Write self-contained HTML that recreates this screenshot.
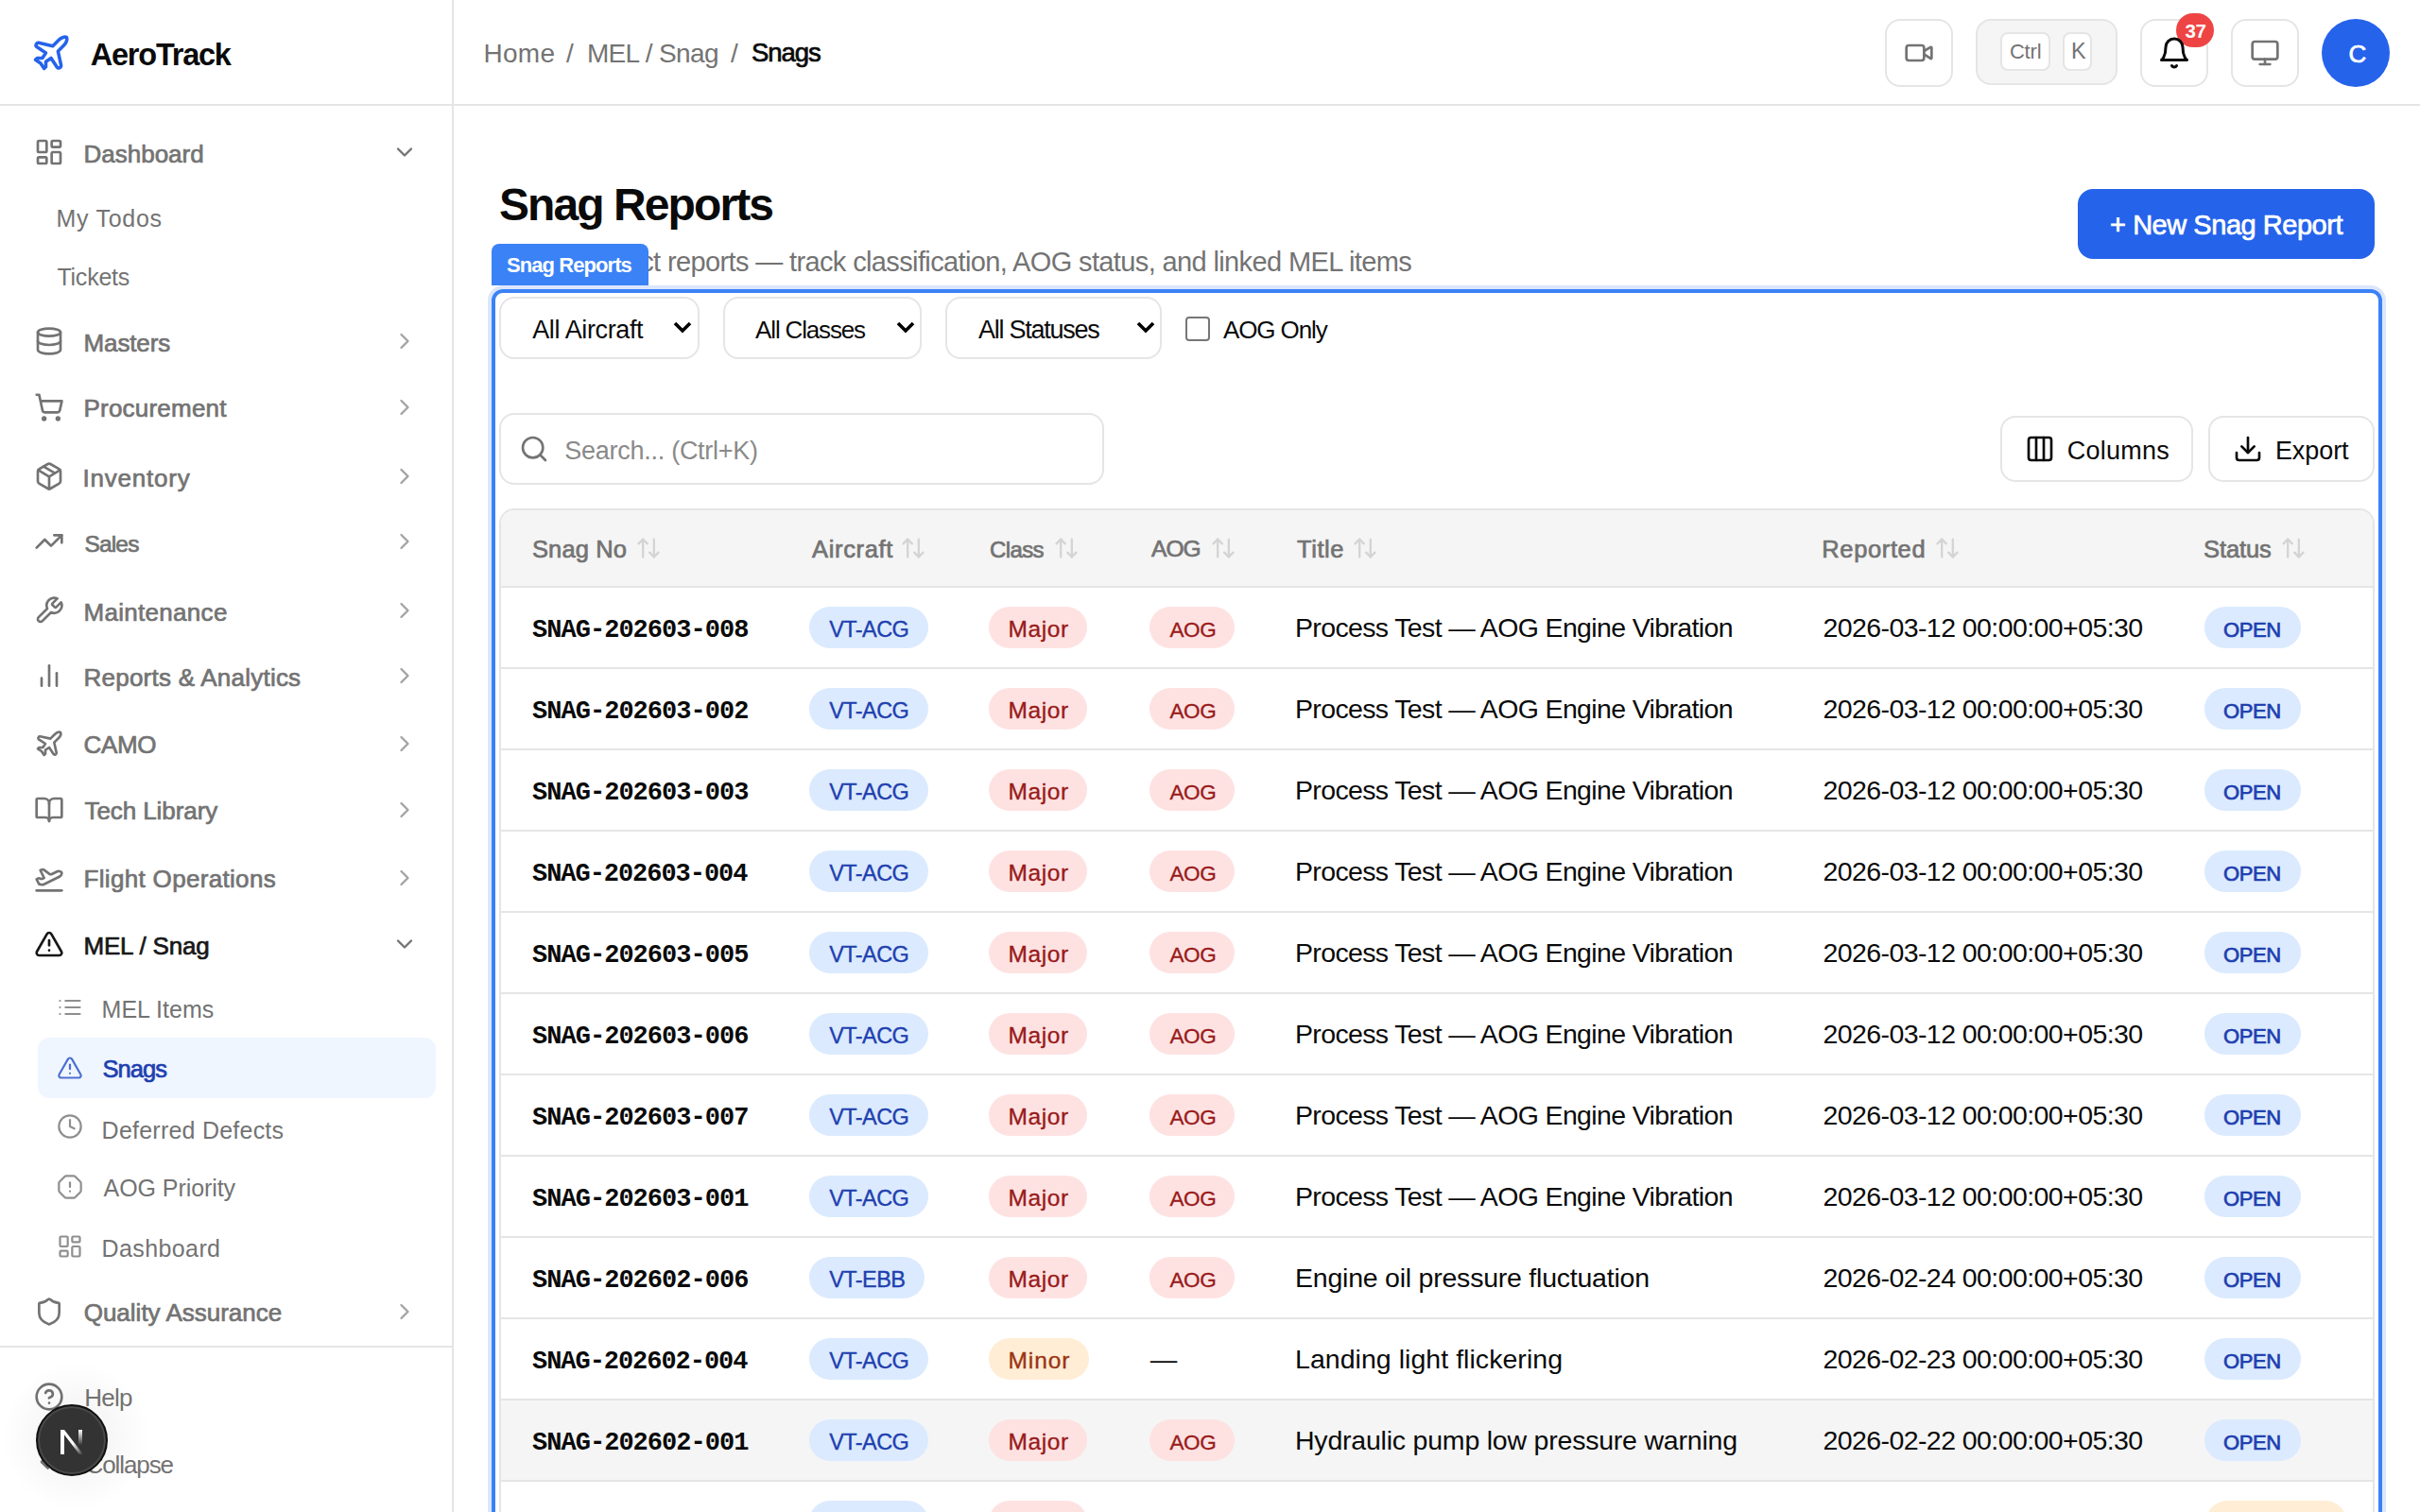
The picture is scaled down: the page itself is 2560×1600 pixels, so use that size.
<!DOCTYPE html><html><head><meta charset="utf-8"><style>
html,body{margin:0;padding:0;width:2560px;height:1600px;overflow:hidden;background:#fff}
.t{position:absolute;white-space:pre}
.b{position:absolute}
.i{position:absolute;display:block}
</style></head><body>
<div class="b" style="left:478px;top:0px;width:2px;height:1600px;background:#e5e5e5"></div>
<div class="b" style="left:0px;top:110px;width:2560px;height:2px;background:#e5e5e5"></div>
<div class="b" style="left:40px;top:1098px;width:421px;height:64px;background:#eff6ff;border-radius:12px"></div>
<div class="b" style="left:0px;top:1424px;width:478px;height:2px;background:#e5e5e5"></div>
<div class="b" style="left:1994px;top:20px;width:72px;height:72px;border:2px solid #e5e5e5;border-radius:16px;box-sizing:border-box;background:#fff"></div>
<div class="b" style="left:2090px;top:20px;width:150px;height:70px;border:2px solid #e5e5e5;border-radius:16px;box-sizing:border-box;background:#f5f5f5"></div>
<div class="b" style="left:2116px;top:34px;width:53px;height:41px;border:2px solid #e5e5e5;border-radius:8px;box-sizing:border-box;background:#fff"></div>
<div class="b" style="left:2182px;top:34px;width:31px;height:41px;border:2px solid #e5e5e5;border-radius:8px;box-sizing:border-box;background:#fff"></div>
<div class="b" style="left:2264px;top:20px;width:72px;height:72px;border:2px solid #e5e5e5;border-radius:16px;box-sizing:border-box;background:#fff"></div>
<div class="b" style="left:2302px;top:14px;width:40px;height:36px;background:#ef4444;border-radius:18px"></div>
<div class="b" style="left:2360px;top:20px;width:72px;height:72px;border:2px solid #e5e5e5;border-radius:16px;box-sizing:border-box;background:#fff"></div>
<div class="b" style="left:2456px;top:20px;width:72px;height:72px;background:#2563eb;border-radius:50%"></div>
<div class="b" style="left:2198px;top:200px;width:314px;height:74px;background:#2563eb;border-radius:16px"></div>
<div class="b" style="left:528px;top:314px;width:212px;height:66px;border:2px solid #e5e5e5;border-radius:16px;box-sizing:border-box;background:#fff"></div>
<svg class="i" style="left:710.8px;top:338px;width:22px;height:17px" viewBox="0 0 22 17"><path d="M3 4 L11 12 L19 4" fill="none" stroke="#000" stroke-width="3.6" stroke-linecap="butt" stroke-linejoin="miter"/></svg>
<div class="b" style="left:765px;top:314px;width:210px;height:66px;border:2px solid #e5e5e5;border-radius:16px;box-sizing:border-box;background:#fff"></div>
<svg class="i" style="left:947.4px;top:338px;width:22px;height:17px" viewBox="0 0 22 17"><path d="M3 4 L11 12 L19 4" fill="none" stroke="#000" stroke-width="3.6" stroke-linecap="butt" stroke-linejoin="miter"/></svg>
<div class="b" style="left:1000px;top:314px;width:229px;height:66px;border:2px solid #e5e5e5;border-radius:16px;box-sizing:border-box;background:#fff"></div>
<svg class="i" style="left:1200.9px;top:338px;width:22px;height:17px" viewBox="0 0 22 17"><path d="M3 4 L11 12 L19 4" fill="none" stroke="#000" stroke-width="3.6" stroke-linecap="butt" stroke-linejoin="miter"/></svg>
<div class="b" style="left:1254px;top:335px;width:26px;height:26px;border:2px solid #767676;border-radius:4px;box-sizing:border-box;background:#fff"></div>
<div class="b" style="left:528px;top:437px;width:640px;height:76px;border:2px solid #e5e5e5;border-radius:16px;box-sizing:border-box;background:#fff"></div>
<div class="b" style="left:2116px;top:440px;width:204px;height:70px;border:2px solid #e5e5e5;border-radius:16px;box-sizing:border-box;background:#fff"></div>
<div class="b" style="left:2336px;top:440px;width:176px;height:70px;border:2px solid #e5e5e5;border-radius:16px;box-sizing:border-box;background:#fff"></div>
<div class="b" style="left:528px;top:538px;width:1984px;height:1100px;border:2px solid #e5e5e5;border-radius:16px;box-sizing:border-box;background:#fff;overflow:hidden"></div>
<div class="b" style="left:530px;top:540px;width:1980px;height:80px;background:#f5f5f5;border-radius:14px 14px 0 0"></div>
<div class="b" style="left:530px;top:620px;width:1980px;height:2px;background:#e5e5e5"></div>
<div class="b" style="left:530px;top:706px;width:1980px;height:2px;background:#e5e5e5"></div>
<div class="b" style="left:856px;top:642px;width:126px;height:44px;background:#dbeafe;border-radius:22px"></div>
<div class="b" style="left:1046px;top:642px;width:104px;height:44px;background:#fee2e2;border-radius:22px"></div>
<div class="b" style="left:1216px;top:642px;width:90px;height:44px;background:#fee2e2;border-radius:22px"></div>
<div class="b" style="left:2332px;top:642px;width:102px;height:44px;background:#dbeafe;border-radius:22px"></div>
<div class="b" style="left:530px;top:792px;width:1980px;height:2px;background:#e5e5e5"></div>
<div class="b" style="left:856px;top:728px;width:126px;height:44px;background:#dbeafe;border-radius:22px"></div>
<div class="b" style="left:1046px;top:728px;width:104px;height:44px;background:#fee2e2;border-radius:22px"></div>
<div class="b" style="left:1216px;top:728px;width:90px;height:44px;background:#fee2e2;border-radius:22px"></div>
<div class="b" style="left:2332px;top:728px;width:102px;height:44px;background:#dbeafe;border-radius:22px"></div>
<div class="b" style="left:530px;top:878px;width:1980px;height:2px;background:#e5e5e5"></div>
<div class="b" style="left:856px;top:814px;width:126px;height:44px;background:#dbeafe;border-radius:22px"></div>
<div class="b" style="left:1046px;top:814px;width:104px;height:44px;background:#fee2e2;border-radius:22px"></div>
<div class="b" style="left:1216px;top:814px;width:90px;height:44px;background:#fee2e2;border-radius:22px"></div>
<div class="b" style="left:2332px;top:814px;width:102px;height:44px;background:#dbeafe;border-radius:22px"></div>
<div class="b" style="left:530px;top:964px;width:1980px;height:2px;background:#e5e5e5"></div>
<div class="b" style="left:856px;top:900px;width:126px;height:44px;background:#dbeafe;border-radius:22px"></div>
<div class="b" style="left:1046px;top:900px;width:104px;height:44px;background:#fee2e2;border-radius:22px"></div>
<div class="b" style="left:1216px;top:900px;width:90px;height:44px;background:#fee2e2;border-radius:22px"></div>
<div class="b" style="left:2332px;top:900px;width:102px;height:44px;background:#dbeafe;border-radius:22px"></div>
<div class="b" style="left:530px;top:1050px;width:1980px;height:2px;background:#e5e5e5"></div>
<div class="b" style="left:856px;top:986px;width:126px;height:44px;background:#dbeafe;border-radius:22px"></div>
<div class="b" style="left:1046px;top:986px;width:104px;height:44px;background:#fee2e2;border-radius:22px"></div>
<div class="b" style="left:1216px;top:986px;width:90px;height:44px;background:#fee2e2;border-radius:22px"></div>
<div class="b" style="left:2332px;top:986px;width:102px;height:44px;background:#dbeafe;border-radius:22px"></div>
<div class="b" style="left:530px;top:1136px;width:1980px;height:2px;background:#e5e5e5"></div>
<div class="b" style="left:856px;top:1072px;width:126px;height:44px;background:#dbeafe;border-radius:22px"></div>
<div class="b" style="left:1046px;top:1072px;width:104px;height:44px;background:#fee2e2;border-radius:22px"></div>
<div class="b" style="left:1216px;top:1072px;width:90px;height:44px;background:#fee2e2;border-radius:22px"></div>
<div class="b" style="left:2332px;top:1072px;width:102px;height:44px;background:#dbeafe;border-radius:22px"></div>
<div class="b" style="left:530px;top:1222px;width:1980px;height:2px;background:#e5e5e5"></div>
<div class="b" style="left:856px;top:1158px;width:126px;height:44px;background:#dbeafe;border-radius:22px"></div>
<div class="b" style="left:1046px;top:1158px;width:104px;height:44px;background:#fee2e2;border-radius:22px"></div>
<div class="b" style="left:1216px;top:1158px;width:90px;height:44px;background:#fee2e2;border-radius:22px"></div>
<div class="b" style="left:2332px;top:1158px;width:102px;height:44px;background:#dbeafe;border-radius:22px"></div>
<div class="b" style="left:530px;top:1308px;width:1980px;height:2px;background:#e5e5e5"></div>
<div class="b" style="left:856px;top:1244px;width:126px;height:44px;background:#dbeafe;border-radius:22px"></div>
<div class="b" style="left:1046px;top:1244px;width:104px;height:44px;background:#fee2e2;border-radius:22px"></div>
<div class="b" style="left:1216px;top:1244px;width:90px;height:44px;background:#fee2e2;border-radius:22px"></div>
<div class="b" style="left:2332px;top:1244px;width:102px;height:44px;background:#dbeafe;border-radius:22px"></div>
<div class="b" style="left:530px;top:1394px;width:1980px;height:2px;background:#e5e5e5"></div>
<div class="b" style="left:856px;top:1330px;width:122px;height:44px;background:#dbeafe;border-radius:22px"></div>
<div class="b" style="left:1046px;top:1330px;width:104px;height:44px;background:#fee2e2;border-radius:22px"></div>
<div class="b" style="left:1216px;top:1330px;width:90px;height:44px;background:#fee2e2;border-radius:22px"></div>
<div class="b" style="left:2332px;top:1330px;width:102px;height:44px;background:#dbeafe;border-radius:22px"></div>
<div class="b" style="left:530px;top:1480px;width:1980px;height:2px;background:#e5e5e5"></div>
<div class="b" style="left:856px;top:1416px;width:126px;height:44px;background:#dbeafe;border-radius:22px"></div>
<div class="b" style="left:1046px;top:1416px;width:106px;height:44px;background:#ffedd5;border-radius:22px"></div>
<div class="b" style="left:2332px;top:1416px;width:102px;height:44px;background:#dbeafe;border-radius:22px"></div>
<div class="b" style="left:530px;top:1482px;width:1980px;height:84px;background:#f5f5f5"></div>
<div class="b" style="left:530px;top:1566px;width:1980px;height:2px;background:#e5e5e5"></div>
<div class="b" style="left:856px;top:1502px;width:126px;height:44px;background:#dbeafe;border-radius:22px"></div>
<div class="b" style="left:1046px;top:1502px;width:104px;height:44px;background:#fee2e2;border-radius:22px"></div>
<div class="b" style="left:1216px;top:1502px;width:90px;height:44px;background:#fee2e2;border-radius:22px"></div>
<div class="b" style="left:2332px;top:1502px;width:102px;height:44px;background:#dbeafe;border-radius:22px"></div>
<div class="b" style="left:530px;top:1652px;width:1980px;height:2px;background:#e5e5e5"></div>
<div class="b" style="left:856px;top:1588px;width:126px;height:44px;background:#dbeafe;border-radius:22px"></div>
<div class="b" style="left:1046px;top:1588px;width:104px;height:44px;background:#fee2e2;border-radius:22px"></div>
<div class="b" style="left:2334px;top:1588px;width:148px;height:44px;background:#ffedd5;border-radius:22px"></div>
<svg class="i" style="left:32px;top:34px;width:44px;height:44px" viewBox="0 0 24 24" fill="none" stroke="#2563eb" stroke-width="1.95" stroke-linecap="round" stroke-linejoin="round"><path d="M17.8 19.2 16 11l3.5-3.5C21 6 21.5 4 21 3c-1-.5-3 0-4.5 1.5L13 8 4.8 6.2c-.5-.1-.9.1-1.1.5l-.3.5c-.2.5-.1 1 .3 1.3L9 12l-2 3H4l-1 1 3 2 2 3 1-1v-3l3-2 3.5 5.3c.3.4.8.5 1.3.3l.5-.2c.4-.3.6-.7.5-1.2z"/></svg>
<svg class="i" style="left:36px;top:145px;width:32px;height:32px" viewBox="0 0 24 24" fill="none" stroke="#737373" stroke-width="2" stroke-linecap="round" stroke-linejoin="round"><rect width="7" height="9" x="3" y="3" rx="1"/><rect width="7" height="5" x="14" y="3" rx="1"/><rect width="7" height="9" x="14" y="12" rx="1"/><rect width="7" height="5" x="3" y="16" rx="1"/></svg>
<svg class="i" style="left:414px;top:147px;width:28px;height:28px" viewBox="0 0 24 24" fill="none" stroke="#737373" stroke-width="2" stroke-linecap="round" stroke-linejoin="round"><path d="m6 9 6 6 6-6"/></svg>
<svg class="i" style="left:36px;top:345px;width:32px;height:32px" viewBox="0 0 24 24" fill="none" stroke="#737373" stroke-width="2" stroke-linecap="round" stroke-linejoin="round"><ellipse cx="12" cy="5" rx="9" ry="3"/><path d="M3 5V19A9 3 0 0 0 21 19V5"/><path d="M3 12A9 3 0 0 0 21 12"/></svg>
<svg class="i" style="left:414px;top:347px;width:28px;height:28px" viewBox="0 0 24 24" fill="none" stroke="#a3a3a3" stroke-width="2" stroke-linecap="round" stroke-linejoin="round"><path d="m9 18 6-6-6-6"/></svg>
<svg class="i" style="left:36px;top:415px;width:32px;height:32px" viewBox="0 0 24 24" fill="none" stroke="#737373" stroke-width="2" stroke-linecap="round" stroke-linejoin="round"><circle cx="8" cy="21" r="1"/><circle cx="19" cy="21" r="1"/><path d="M2.05 2.05h2l2.66 12.42a2 2 0 0 0 2 1.58h9.78a2 2 0 0 0 1.95-1.57l1.65-7.43H5.12"/></svg>
<svg class="i" style="left:414px;top:417px;width:28px;height:28px" viewBox="0 0 24 24" fill="none" stroke="#a3a3a3" stroke-width="2" stroke-linecap="round" stroke-linejoin="round"><path d="m9 18 6-6-6-6"/></svg>
<svg class="i" style="left:36px;top:488px;width:32px;height:32px" viewBox="0 0 24 24" fill="none" stroke="#737373" stroke-width="2" stroke-linecap="round" stroke-linejoin="round"><path d="M11 21.73a2 2 0 0 0 2 0l7-4A2 2 0 0 0 21 16V8a2 2 0 0 0-1-1.73l-7-4a2 2 0 0 0-2 0l-7 4A2 2 0 0 0 3 8v8a2 2 0 0 0 1 1.73z"/><path d="M12 22V12"/><path d="m3.3 7 7.703 4.734a2 2 0 0 0 1.994 0L20.7 7"/><path d="m7.5 4.27 9 5.15"/></svg>
<svg class="i" style="left:414px;top:490px;width:28px;height:28px" viewBox="0 0 24 24" fill="none" stroke="#a3a3a3" stroke-width="2" stroke-linecap="round" stroke-linejoin="round"><path d="m9 18 6-6-6-6"/></svg>
<svg class="i" style="left:36px;top:557px;width:32px;height:32px" viewBox="0 0 24 24" fill="none" stroke="#737373" stroke-width="2" stroke-linecap="round" stroke-linejoin="round"><polyline points="22 7 13.5 15.5 8.5 10.5 2 17"/><polyline points="16 7 22 7 22 13"/></svg>
<svg class="i" style="left:414px;top:559px;width:28px;height:28px" viewBox="0 0 24 24" fill="none" stroke="#a3a3a3" stroke-width="2" stroke-linecap="round" stroke-linejoin="round"><path d="m9 18 6-6-6-6"/></svg>
<svg class="i" style="left:36px;top:630px;width:32px;height:32px" viewBox="0 0 24 24" fill="none" stroke="#737373" stroke-width="2" stroke-linecap="round" stroke-linejoin="round"><path d="M14.7 6.3a1 1 0 0 0 0 1.4l1.6 1.6a1 1 0 0 0 1.4 0l3.77-3.77a6 6 0 0 1-7.94 7.94l-6.91 6.91a2.12 2.12 0 0 1-3-3l6.91-6.91a6 6 0 0 1 7.94-7.94l-3.76 3.76z"/></svg>
<svg class="i" style="left:414px;top:632px;width:28px;height:28px" viewBox="0 0 24 24" fill="none" stroke="#a3a3a3" stroke-width="2" stroke-linecap="round" stroke-linejoin="round"><path d="m9 18 6-6-6-6"/></svg>
<svg class="i" style="left:36px;top:699px;width:32px;height:32px" viewBox="0 0 24 24" fill="none" stroke="#737373" stroke-width="2" stroke-linecap="round" stroke-linejoin="round"><line x1="18" x2="18" y1="20" y2="10"/><line x1="12" x2="12" y1="20" y2="4"/><line x1="6" x2="6" y1="20" y2="14"/></svg>
<svg class="i" style="left:414px;top:701px;width:28px;height:28px" viewBox="0 0 24 24" fill="none" stroke="#a3a3a3" stroke-width="2" stroke-linecap="round" stroke-linejoin="round"><path d="m9 18 6-6-6-6"/></svg>
<svg class="i" style="left:36px;top:771px;width:32px;height:32px" viewBox="0 0 24 24" fill="none" stroke="#737373" stroke-width="2" stroke-linecap="round" stroke-linejoin="round"><path d="M17.8 19.2 16 11l3.5-3.5C21 6 21.5 4 21 3c-1-.5-3 0-4.5 1.5L13 8 4.8 6.2c-.5-.1-.9.1-1.1.5l-.3.5c-.2.5-.1 1 .3 1.3L9 12l-2 3H4l-1 1 3 2 2 3 1-1v-3l3-2 3.5 5.3c.3.4.8.5 1.3.3l.5-.2c.4-.3.6-.7.5-1.2z"/></svg>
<svg class="i" style="left:414px;top:773px;width:28px;height:28px" viewBox="0 0 24 24" fill="none" stroke="#a3a3a3" stroke-width="2" stroke-linecap="round" stroke-linejoin="round"><path d="m9 18 6-6-6-6"/></svg>
<svg class="i" style="left:36px;top:841px;width:32px;height:32px" viewBox="0 0 24 24" fill="none" stroke="#737373" stroke-width="2" stroke-linecap="round" stroke-linejoin="round"><path d="M12 7v14"/><path d="M3 18a1 1 0 0 1-1-1V4a1 1 0 0 1 1-1h5a4 4 0 0 1 4 4 4 4 0 0 1 4-4h5a1 1 0 0 1 1 1v13a1 1 0 0 1-1 1h-6a3 3 0 0 0-3 3 3 3 0 0 0-3-3z"/></svg>
<svg class="i" style="left:414px;top:843px;width:28px;height:28px" viewBox="0 0 24 24" fill="none" stroke="#a3a3a3" stroke-width="2" stroke-linecap="round" stroke-linejoin="round"><path d="m9 18 6-6-6-6"/></svg>
<svg class="i" style="left:36px;top:913px;width:32px;height:32px" viewBox="0 0 24 24" fill="none" stroke="#737373" stroke-width="2" stroke-linecap="round" stroke-linejoin="round"><path d="M2 22h20"/><path d="M6.36 17.4 4 17l-2-4 1.1-.55a2 2 0 0 1 1.8 0l.17.1a2 2 0 0 0 1.8 0L8 12 5 6l.9-.45a2 2 0 0 1 2.09.2l4.02 3a2 2 0 0 0 2.1.2l4.19-2.06a2.41 2.41 0 0 1 1.73-.17L21 7a1.4 1.4 0 0 1 .87 1.99l-.38.76c-.23.46-.6.84-1.07 1.08L7.58 17.2a2 2 0 0 1-1.22.18Z"/></svg>
<svg class="i" style="left:414px;top:915px;width:28px;height:28px" viewBox="0 0 24 24" fill="none" stroke="#a3a3a3" stroke-width="2" stroke-linecap="round" stroke-linejoin="round"><path d="m9 18 6-6-6-6"/></svg>
<svg class="i" style="left:36px;top:983px;width:32px;height:32px" viewBox="0 0 24 24" fill="none" stroke="#171717" stroke-width="2" stroke-linecap="round" stroke-linejoin="round"><path d="m21.73 18-8-14a2 2 0 0 0-3.48 0l-8 14A2 2 0 0 0 4 21h16a2 2 0 0 0 1.73-3"/><path d="M12 9v4"/><path d="M12 17h.01"/></svg>
<svg class="i" style="left:414px;top:985px;width:28px;height:28px" viewBox="0 0 24 24" fill="none" stroke="#737373" stroke-width="2" stroke-linecap="round" stroke-linejoin="round"><path d="m6 9 6 6 6-6"/></svg>
<svg class="i" style="left:36px;top:1372px;width:32px;height:32px" viewBox="0 0 24 24" fill="none" stroke="#737373" stroke-width="2" stroke-linecap="round" stroke-linejoin="round"><path d="M20 13c0 5-3.5 7.5-7.66 8.95a1 1 0 0 1-.67-.01C7.5 20.5 4 18 4 13V6a1 1 0 0 1 1-1c2 0 4.5-1.2 6.24-2.72a1.17 1.17 0 0 1 1.52 0C14.51 3.81 17 5 19 5a1 1 0 0 1 1 1z"/></svg>
<svg class="i" style="left:414px;top:1374px;width:28px;height:28px" viewBox="0 0 24 24" fill="none" stroke="#a3a3a3" stroke-width="2" stroke-linecap="round" stroke-linejoin="round"><path d="m9 18 6-6-6-6"/></svg>
<svg class="i" style="left:60px;top:1052px;width:28px;height:28px" viewBox="0 0 24 24" fill="none" stroke="#8f8f8f" stroke-width="1.9" stroke-linecap="round" stroke-linejoin="round"><path d="M3 12h.01"/><path d="M3 18h.01"/><path d="M3 6h.01"/><path d="M8 12h13"/><path d="M8 18h13"/><path d="M8 6h13"/></svg>
<svg class="i" style="left:60px;top:1116px;width:28px;height:28px" viewBox="0 0 24 24" fill="none" stroke="#4f6fd0" stroke-width="1.9" stroke-linecap="round" stroke-linejoin="round"><path d="m21.73 18-8-14a2 2 0 0 0-3.48 0l-8 14A2 2 0 0 0 4 21h16a2 2 0 0 0 1.73-3"/><path d="M12 9v4"/><path d="M12 17h.01"/></svg>
<svg class="i" style="left:60px;top:1178px;width:28px;height:28px" viewBox="0 0 24 24" fill="none" stroke="#8f8f8f" stroke-width="1.9" stroke-linecap="round" stroke-linejoin="round"><circle cx="12" cy="12" r="10"/><polyline points="12 6 12 12 16 14"/></svg>
<svg class="i" style="left:60px;top:1242px;width:28px;height:28px" viewBox="0 0 24 24" fill="none" stroke="#8f8f8f" stroke-width="1.9" stroke-linecap="round" stroke-linejoin="round"><path d="M12 16h.01"/><path d="M12 8v4"/><path d="M15.312 2a2 2 0 0 1 1.414.586l4.688 4.688A2 2 0 0 1 22 8.688v6.624a2 2 0 0 1-.586 1.414l-4.688 4.688a2 2 0 0 1-1.414.586H8.688a2 2 0 0 1-1.414-.586l-4.688-4.688A2 2 0 0 1 2 15.312V8.688a2 2 0 0 1 .586-1.414l4.688-4.688A2 2 0 0 1 8.688 2z"/></svg>
<svg class="i" style="left:60px;top:1305px;width:28px;height:28px" viewBox="0 0 24 24" fill="none" stroke="#8f8f8f" stroke-width="1.9" stroke-linecap="round" stroke-linejoin="round"><rect width="7" height="9" x="3" y="3" rx="1"/><rect width="7" height="5" x="14" y="3" rx="1"/><rect width="7" height="9" x="14" y="12" rx="1"/><rect width="7" height="5" x="3" y="16" rx="1"/></svg>
<svg class="i" style="left:36px;top:1462px;width:32px;height:32px" viewBox="0 0 24 24" fill="none" stroke="#737373" stroke-width="2" stroke-linecap="round" stroke-linejoin="round"><circle cx="12" cy="12" r="10"/><path d="M9.09 9a3 3 0 0 1 5.83 1c0 2-3 3-3 3"/><path d="M12 17h.01"/></svg>
<svg class="i" style="left:36px;top:1531px;width:32px;height:32px" viewBox="0 0 24 24" fill="none" stroke="#737373" stroke-width="2" stroke-linecap="round" stroke-linejoin="round"><path d="m11 17-5-5 5-5"/><path d="m18 17-5-5 5-5"/></svg>
<svg class="i" style="left:2014px;top:40px;width:32px;height:32px" viewBox="0 0 24 24" fill="none" stroke="#737373" stroke-width="2" stroke-linecap="round" stroke-linejoin="round"><path d="m16 13 5.223 3.482a.5.5 0 0 0 .777-.416V7.87a.5.5 0 0 0-.752-.432L16 10.5"/><rect x="2" y="6" width="14" height="12" rx="2"/></svg>
<svg class="i" style="left:2282px;top:38px;width:36px;height:36px" viewBox="0 0 24 24" fill="none" stroke="#0a0a0a" stroke-width="2" stroke-linecap="round" stroke-linejoin="round"><path d="M6 8a6 6 0 0 1 12 0c0 7 3 9 3 9H3s3-2 3-9"/><path d="M10.3 21a1.94 1.94 0 0 0 3.4 0"/></svg>
<svg class="i" style="left:2380px;top:40px;width:32px;height:32px" viewBox="0 0 24 24" fill="none" stroke="#737373" stroke-width="2" stroke-linecap="round" stroke-linejoin="round"><rect width="20" height="14" x="2" y="3" rx="2"/><line x1="8" x2="16" y1="21" y2="21"/><line x1="12" x2="12" y1="17" y2="21"/></svg>
<svg class="i" style="left:549px;top:459px;width:32px;height:32px" viewBox="0 0 24 24" fill="none" stroke="#737373" stroke-width="2" stroke-linecap="round" stroke-linejoin="round"><circle cx="11" cy="11" r="8"/><path d="m21 21-4.3-4.3"/></svg>
<svg class="i" style="left:2142px;top:459px;width:32px;height:32px" viewBox="0 0 24 24" fill="none" stroke="#0a0a0a" stroke-width="2" stroke-linecap="round" stroke-linejoin="round"><rect width="18" height="18" x="3" y="3" rx="2"/><path d="M9 3v18"/><path d="M15 3v18"/></svg>
<svg class="i" style="left:2362px;top:459px;width:32px;height:32px" viewBox="0 0 24 24" fill="none" stroke="#0a0a0a" stroke-width="2" stroke-linecap="round" stroke-linejoin="round"><path d="M21 15v4a2 2 0 0 1-2 2H5a2 2 0 0 1-2-2v-4"/><polyline points="7 10 12 15 17 10"/><line x1="12" x2="12" y1="15" y2="3"/></svg>
<svg class="i" style="left:672px;top:566px;width:28px;height:28px" viewBox="0 0 24 24" fill="none" stroke="#d4d4d4" stroke-width="2" stroke-linecap="round" stroke-linejoin="round"><path d="m21 16-4 4-4-4"/><path d="M17 20V4"/><path d="m3 8 4-4 4 4"/><path d="M7 4v16"/></svg>
<svg class="i" style="left:952px;top:566px;width:28px;height:28px" viewBox="0 0 24 24" fill="none" stroke="#d4d4d4" stroke-width="2" stroke-linecap="round" stroke-linejoin="round"><path d="m21 16-4 4-4-4"/><path d="M17 20V4"/><path d="m3 8 4-4 4 4"/><path d="M7 4v16"/></svg>
<svg class="i" style="left:1114px;top:566px;width:28px;height:28px" viewBox="0 0 24 24" fill="none" stroke="#d4d4d4" stroke-width="2" stroke-linecap="round" stroke-linejoin="round"><path d="m21 16-4 4-4-4"/><path d="M17 20V4"/><path d="m3 8 4-4 4 4"/><path d="M7 4v16"/></svg>
<svg class="i" style="left:1280px;top:566px;width:28px;height:28px" viewBox="0 0 24 24" fill="none" stroke="#d4d4d4" stroke-width="2" stroke-linecap="round" stroke-linejoin="round"><path d="m21 16-4 4-4-4"/><path d="M17 20V4"/><path d="m3 8 4-4 4 4"/><path d="M7 4v16"/></svg>
<svg class="i" style="left:1430px;top:566px;width:28px;height:28px" viewBox="0 0 24 24" fill="none" stroke="#d4d4d4" stroke-width="2" stroke-linecap="round" stroke-linejoin="round"><path d="m21 16-4 4-4-4"/><path d="M17 20V4"/><path d="m3 8 4-4 4 4"/><path d="M7 4v16"/></svg>
<svg class="i" style="left:2046px;top:566px;width:28px;height:28px" viewBox="0 0 24 24" fill="none" stroke="#d4d4d4" stroke-width="2" stroke-linecap="round" stroke-linejoin="round"><path d="m21 16-4 4-4-4"/><path d="M17 20V4"/><path d="m3 8 4-4 4 4"/><path d="M7 4v16"/></svg>
<svg class="i" style="left:2412px;top:566px;width:28px;height:28px" viewBox="0 0 24 24" fill="none" stroke="#d4d4d4" stroke-width="2" stroke-linecap="round" stroke-linejoin="round"><path d="m21 16-4 4-4-4"/><path d="M17 20V4"/><path d="m3 8 4-4 4 4"/><path d="M7 4v16"/></svg>
<div id="logo" class="t" style="left:95.80px;top:41.99px;font:700 32.5px/32.5px 'Liberation Sans',sans-serif;letter-spacing:-1.237px;color:#0a0a0a">AeroTrack</div>
<div id="nav0" class="t" style="left:88.50px;top:149.79px;font:400 26.0px/26.0px 'Liberation Sans',sans-serif;-webkit-text-stroke:0.7px #737373;letter-spacing:0.000px;color:#737373">Dashboard</div>
<div id="nav1" class="t" style="left:88.50px;top:349.79px;font:400 26.0px/26.0px 'Liberation Sans',sans-serif;-webkit-text-stroke:0.7px #737373;letter-spacing:-0.117px;color:#737373">Masters</div>
<div id="nav2" class="t" style="left:88.50px;top:419.49px;font:400 26.0px/26.0px 'Liberation Sans',sans-serif;-webkit-text-stroke:0.7px #737373;letter-spacing:0.210px;color:#737373">Procurement</div>
<div id="nav3" class="t" style="left:87.50px;top:492.59px;font:400 26.0px/26.0px 'Liberation Sans',sans-serif;-webkit-text-stroke:0.7px #737373;letter-spacing:0.788px;color:#737373">Inventory</div>
<div id="nav4" class="t" style="left:89.50px;top:563.66px;font:400 24.5px/24.5px 'Liberation Sans',sans-serif;-webkit-text-stroke:0.7px #737373;letter-spacing:-0.850px;color:#737373">Sales</div>
<div id="nav5" class="t" style="left:88.50px;top:634.59px;font:400 26.0px/26.0px 'Liberation Sans',sans-serif;-webkit-text-stroke:0.7px #737373;letter-spacing:0.300px;color:#737373">Maintenance</div>
<div id="nav6" class="t" style="left:88.50px;top:704.09px;font:400 26.0px/26.0px 'Liberation Sans',sans-serif;-webkit-text-stroke:0.7px #737373;letter-spacing:0.233px;color:#737373">Reports &amp; Analytics</div>
<div id="nav7" class="t" style="left:88.50px;top:775.49px;font:400 26.0px/26.0px 'Liberation Sans',sans-serif;-webkit-text-stroke:0.7px #737373;letter-spacing:-0.367px;color:#737373">CAMO</div>
<div id="nav8" class="t" style="left:89.50px;top:844.89px;font:400 26.0px/26.0px 'Liberation Sans',sans-serif;-webkit-text-stroke:0.7px #737373;letter-spacing:-0.082px;color:#737373">Tech Library</div>
<div id="nav9" class="t" style="left:88.50px;top:917.29px;font:400 26.0px/26.0px 'Liberation Sans',sans-serif;-webkit-text-stroke:0.7px #737373;letter-spacing:0.325px;color:#737373">Flight Operations</div>
<div id="nav10" class="t" style="left:88.50px;top:987.79px;font:400 26.0px/26.0px 'Liberation Sans',sans-serif;-webkit-text-stroke:0.7px #171717;letter-spacing:-0.189px;color:#171717">MEL / Snag</div>
<div id="nav11" class="t" style="left:88.70px;top:1375.99px;font:400 26.0px/26.0px 'Liberation Sans',sans-serif;-webkit-text-stroke:0.7px #737373;letter-spacing:-0.000px;color:#737373">Quality Assurance</div>
<div id="sub0" class="t" style="left:59.60px;top:218.94px;font:400 25.0px/25.0px 'Liberation Sans',sans-serif;letter-spacing:0.700px;color:#737373">My Todos</div>
<div id="sub1" class="t" style="left:60.40px;top:280.64px;font:400 25.0px/25.0px 'Liberation Sans',sans-serif;letter-spacing:-0.217px;color:#737373">Tickets</div>
<div id="msub0" class="t" style="left:107.60px;top:1056.04px;font:400 25.0px/25.0px 'Liberation Sans',sans-serif;letter-spacing:0.013px;color:#737373">MEL Items</div>
<div id="msub1" class="t" style="left:108.60px;top:1119.41px;font:400 25.5px/25.5px 'Liberation Sans',sans-serif;-webkit-text-stroke:0.7px #1e40af;letter-spacing:-1.000px;color:#1e40af">Snags</div>
<div id="msub2" class="t" style="left:107.60px;top:1183.94px;font:400 25.0px/25.0px 'Liberation Sans',sans-serif;letter-spacing:0.233px;color:#737373">Deferred Defects</div>
<div id="msub3" class="t" style="left:109.60px;top:1244.64px;font:400 25.0px/25.0px 'Liberation Sans',sans-serif;letter-spacing:-0.073px;color:#737373">AOG Priority</div>
<div id="msub4" class="t" style="left:107.60px;top:1309.04px;font:400 25.0px/25.0px 'Liberation Sans',sans-serif;letter-spacing:0.387px;color:#737373">Dashboard</div>
<div id="help" class="t" style="left:89.30px;top:1465.99px;font:400 26.0px/26.0px 'Liberation Sans',sans-serif;letter-spacing:-0.767px;color:#737373">Help</div>
<div id="collapse" class="t" style="left:90.50px;top:1537.29px;font:400 26.0px/26.0px 'Liberation Sans',sans-serif;letter-spacing:-1.086px;color:#737373">Collapse</div>
<div id="bc0" class="t" style="left:511.60px;top:42.80px;font:400 28.0px/28.0px 'Liberation Sans',sans-serif;letter-spacing:0.233px;color:#737373">Home</div>
<div id="bc1" class="t" style="left:599.00px;top:42.80px;font:400 28.0px/28.0px 'Liberation Sans',sans-serif;letter-spacing:0.000px;color:#737373">/</div>
<div id="bc2" class="t" style="left:620.90px;top:42.80px;font:400 28.0px/28.0px 'Liberation Sans',sans-serif;letter-spacing:-0.633px;color:#737373">MEL / Snag</div>
<div id="bc3" class="t" style="left:773.10px;top:42.80px;font:400 28.0px/28.0px 'Liberation Sans',sans-serif;letter-spacing:0.000px;color:#737373">/</div>
<div id="bc4" class="t" style="left:795.00px;top:42.22px;font:400 27.5px/27.5px 'Liberation Sans',sans-serif;-webkit-text-stroke:0.7px #0a0a0a;letter-spacing:-1.050px;color:#0a0a0a">Snags</div>
<div id="ctrl" class="t" style="left:2125.90px;top:43.68px;font:400 22.0px/22.0px 'Liberation Sans',sans-serif;letter-spacing:-0.167px;color:#737373">Ctrl</div>
<div id="kk" class="t" style="left:2190.90px;top:43.41px;font:400 23.5px/23.5px 'Liberation Sans',sans-serif;letter-spacing:0.000px;color:#737373">K</div>
<div id="n37" class="t" style="left:2311.40px;top:22.75px;font:700 20.5px/20.5px 'Liberation Sans',sans-serif;letter-spacing:-0.400px;color:#fff">37</div>
<div id="avc" class="t" style="left:2484.50px;top:44.09px;font:400 26.0px/26.0px 'Liberation Sans',sans-serif;-webkit-text-stroke:0.7px #fff;letter-spacing:0.000px;color:#fff">C</div>
<div id="title" class="t" style="left:528.00px;top:192.77px;font:700 48.0px/48.0px 'Liberation Sans',sans-serif;letter-spacing:-1.918px;color:#0a0a0a">Snag Reports</div>
<div id="subtitle" class="t" style="left:529.00px;top:263.25px;font:400 29.0px/29.0px 'Liberation Sans',sans-serif;letter-spacing:-0.627px;color:#737373">Aircraft defect reports — track classification, AOG status, and linked MEL items</div>
<div id="newbtn" class="t" style="left:2232.10px;top:224.45px;font:400 29.0px/29.0px 'Liberation Sans',sans-serif;-webkit-text-stroke:0.7px #fff;letter-spacing:-0.469px;color:#fff">+ New Snag Report</div>
<div id="f_AllAircraft" class="t" style="left:563.20px;top:335.84px;font:400 27.0px/27.0px 'Liberation Sans',sans-serif;letter-spacing:-0.373px;color:#0a0a0a">All Aircraft</div>
<div id="f_AllClasses" class="t" style="left:799.10px;top:335.69px;font:400 26.0px/26.0px 'Liberation Sans',sans-serif;letter-spacing:-1.160px;color:#0a0a0a">All Classes</div>
<div id="f_AllStatuses" class="t" style="left:1034.90px;top:335.84px;font:400 27.0px/27.0px 'Liberation Sans',sans-serif;letter-spacing:-1.245px;color:#0a0a0a">All Statuses</div>
<div id="aogonly" class="t" style="left:1293.90px;top:335.69px;font:400 26.0px/26.0px 'Liberation Sans',sans-serif;letter-spacing:-1.086px;color:#0a0a0a">AOG Only</div>
<div id="search" class="t" style="left:597.20px;top:464.04px;font:400 27.0px/27.0px 'Liberation Sans',sans-serif;letter-spacing:-0.259px;color:#8a8a8a">Search... (Ctrl+K)</div>
<div id="columns" class="t" style="left:2186.80px;top:464.34px;font:400 27.0px/27.0px 'Liberation Sans',sans-serif;letter-spacing:0.217px;color:#0a0a0a">Columns</div>
<div id="export" class="t" style="left:2406.90px;top:464.34px;font:400 27.0px/27.0px 'Liberation Sans',sans-serif;letter-spacing:-0.060px;color:#0a0a0a">Export</div>
<div id="th0" class="t" style="left:563.00px;top:568.51px;font:400 25.5px/25.5px 'Liberation Sans',sans-serif;-webkit-text-stroke:0.7px #737373;letter-spacing:0.100px;color:#737373">Snag No</div>
<div id="th1" class="t" style="left:859.00px;top:568.51px;font:400 25.5px/25.5px 'Liberation Sans',sans-serif;-webkit-text-stroke:0.7px #737373;letter-spacing:0.671px;color:#737373">Aircraft</div>
<div id="th2" class="t" style="left:1047.10px;top:569.78px;font:400 24.0px/24.0px 'Liberation Sans',sans-serif;-webkit-text-stroke:0.7px #737373;letter-spacing:-0.650px;color:#737373">Class</div>
<div id="th3" class="t" style="left:1218.00px;top:569.36px;font:400 24.5px/24.5px 'Liberation Sans',sans-serif;-webkit-text-stroke:0.7px #737373;letter-spacing:-0.900px;color:#737373">AOG</div>
<div id="th4" class="t" style="left:1372.10px;top:568.51px;font:400 25.5px/25.5px 'Liberation Sans',sans-serif;-webkit-text-stroke:0.7px #737373;letter-spacing:0.550px;color:#737373">Title</div>
<div id="th5" class="t" style="left:1927.30px;top:568.51px;font:400 25.5px/25.5px 'Liberation Sans',sans-serif;-webkit-text-stroke:0.7px #737373;letter-spacing:0.629px;color:#737373">Reported</div>
<div id="th6" class="t" style="left:2331.10px;top:568.51px;font:400 25.5px/25.5px 'Liberation Sans',sans-serif;-webkit-text-stroke:0.7px #737373;letter-spacing:-0.120px;color:#737373">Status</div>
<div id="r0no" class="t" style="left:563.00px;top:654.32px;font:700 27.0px/27.0px 'Liberation Mono',monospace;letter-spacing:-0.971px;color:#0a0a0a">SNAG-202603-008</div>
<div id="r0ac" class="t" style="left:877.20px;top:655.11px;font:400 23.5px/23.5px 'Liberation Sans',sans-serif;-webkit-text-stroke:0.35px #1e40af;letter-spacing:-0.560px;color:#1e40af">VT-ACG</div>
<div id="r0cl" class="t" style="left:1066.40px;top:654.26px;font:400 24.5px/24.5px 'Liberation Sans',sans-serif;-webkit-text-stroke:0.35px #991b1b;letter-spacing:0.600px;color:#991b1b">Major</div>
<div id="r0aog" class="t" style="left:1237.40px;top:655.95px;font:400 22.5px/22.5px 'Liberation Sans',sans-serif;-webkit-text-stroke:0.35px #991b1b;letter-spacing:-0.300px;color:#991b1b">AOG</div>
<div id="r0ti" class="t" style="left:1370.00px;top:649.87px;font:400 28.5px/28.5px 'Liberation Sans',sans-serif;letter-spacing:-0.638px;color:#0a0a0a">Process Test — AOG Engine Vibration</div>
<div id="r0dt" class="t" style="left:1928.40px;top:649.87px;font:400 28.5px/28.5px 'Liberation Sans',sans-serif;letter-spacing:-0.575px;color:#0a0a0a">2026-03-12 00:00:00+05:30</div>
<div id="r0st" class="t" style="left:2352.00px;top:656.38px;font:400 22.0px/22.0px 'Liberation Sans',sans-serif;-webkit-text-stroke:0.7px #1e40af;letter-spacing:-0.367px;color:#1e40af">OPEN</div>
<div id="r1no" class="t" style="left:563.00px;top:740.32px;font:700 27.0px/27.0px 'Liberation Mono',monospace;letter-spacing:-0.971px;color:#0a0a0a">SNAG-202603-002</div>
<div id="r1ac" class="t" style="left:877.20px;top:741.11px;font:400 23.5px/23.5px 'Liberation Sans',sans-serif;-webkit-text-stroke:0.35px #1e40af;letter-spacing:-0.560px;color:#1e40af">VT-ACG</div>
<div id="r1cl" class="t" style="left:1066.40px;top:740.26px;font:400 24.5px/24.5px 'Liberation Sans',sans-serif;-webkit-text-stroke:0.35px #991b1b;letter-spacing:0.600px;color:#991b1b">Major</div>
<div id="r1aog" class="t" style="left:1237.40px;top:741.95px;font:400 22.5px/22.5px 'Liberation Sans',sans-serif;-webkit-text-stroke:0.35px #991b1b;letter-spacing:-0.300px;color:#991b1b">AOG</div>
<div id="r1ti" class="t" style="left:1370.00px;top:735.87px;font:400 28.5px/28.5px 'Liberation Sans',sans-serif;letter-spacing:-0.638px;color:#0a0a0a">Process Test — AOG Engine Vibration</div>
<div id="r1dt" class="t" style="left:1928.40px;top:735.87px;font:400 28.5px/28.5px 'Liberation Sans',sans-serif;letter-spacing:-0.575px;color:#0a0a0a">2026-03-12 00:00:00+05:30</div>
<div id="r1st" class="t" style="left:2352.00px;top:742.38px;font:400 22.0px/22.0px 'Liberation Sans',sans-serif;-webkit-text-stroke:0.7px #1e40af;letter-spacing:-0.367px;color:#1e40af">OPEN</div>
<div id="r2no" class="t" style="left:563.00px;top:826.32px;font:700 27.0px/27.0px 'Liberation Mono',monospace;letter-spacing:-0.971px;color:#0a0a0a">SNAG-202603-003</div>
<div id="r2ac" class="t" style="left:877.20px;top:827.11px;font:400 23.5px/23.5px 'Liberation Sans',sans-serif;-webkit-text-stroke:0.35px #1e40af;letter-spacing:-0.560px;color:#1e40af">VT-ACG</div>
<div id="r2cl" class="t" style="left:1066.40px;top:826.26px;font:400 24.5px/24.5px 'Liberation Sans',sans-serif;-webkit-text-stroke:0.35px #991b1b;letter-spacing:0.600px;color:#991b1b">Major</div>
<div id="r2aog" class="t" style="left:1237.40px;top:827.95px;font:400 22.5px/22.5px 'Liberation Sans',sans-serif;-webkit-text-stroke:0.35px #991b1b;letter-spacing:-0.300px;color:#991b1b">AOG</div>
<div id="r2ti" class="t" style="left:1370.00px;top:821.87px;font:400 28.5px/28.5px 'Liberation Sans',sans-serif;letter-spacing:-0.638px;color:#0a0a0a">Process Test — AOG Engine Vibration</div>
<div id="r2dt" class="t" style="left:1928.40px;top:821.87px;font:400 28.5px/28.5px 'Liberation Sans',sans-serif;letter-spacing:-0.575px;color:#0a0a0a">2026-03-12 00:00:00+05:30</div>
<div id="r2st" class="t" style="left:2352.00px;top:828.38px;font:400 22.0px/22.0px 'Liberation Sans',sans-serif;-webkit-text-stroke:0.7px #1e40af;letter-spacing:-0.367px;color:#1e40af">OPEN</div>
<div id="r3no" class="t" style="left:563.00px;top:912.32px;font:700 27.0px/27.0px 'Liberation Mono',monospace;letter-spacing:-1.043px;color:#0a0a0a">SNAG-202603-004</div>
<div id="r3ac" class="t" style="left:877.20px;top:913.11px;font:400 23.5px/23.5px 'Liberation Sans',sans-serif;-webkit-text-stroke:0.35px #1e40af;letter-spacing:-0.560px;color:#1e40af">VT-ACG</div>
<div id="r3cl" class="t" style="left:1066.40px;top:912.26px;font:400 24.5px/24.5px 'Liberation Sans',sans-serif;-webkit-text-stroke:0.35px #991b1b;letter-spacing:0.600px;color:#991b1b">Major</div>
<div id="r3aog" class="t" style="left:1237.40px;top:913.95px;font:400 22.5px/22.5px 'Liberation Sans',sans-serif;-webkit-text-stroke:0.35px #991b1b;letter-spacing:-0.300px;color:#991b1b">AOG</div>
<div id="r3ti" class="t" style="left:1370.00px;top:907.87px;font:400 28.5px/28.5px 'Liberation Sans',sans-serif;letter-spacing:-0.638px;color:#0a0a0a">Process Test — AOG Engine Vibration</div>
<div id="r3dt" class="t" style="left:1928.40px;top:907.87px;font:400 28.5px/28.5px 'Liberation Sans',sans-serif;letter-spacing:-0.575px;color:#0a0a0a">2026-03-12 00:00:00+05:30</div>
<div id="r3st" class="t" style="left:2352.00px;top:914.38px;font:400 22.0px/22.0px 'Liberation Sans',sans-serif;-webkit-text-stroke:0.7px #1e40af;letter-spacing:-0.367px;color:#1e40af">OPEN</div>
<div id="r4no" class="t" style="left:563.00px;top:998.32px;font:700 27.0px/27.0px 'Liberation Mono',monospace;letter-spacing:-0.971px;color:#0a0a0a">SNAG-202603-005</div>
<div id="r4ac" class="t" style="left:877.20px;top:999.11px;font:400 23.5px/23.5px 'Liberation Sans',sans-serif;-webkit-text-stroke:0.35px #1e40af;letter-spacing:-0.560px;color:#1e40af">VT-ACG</div>
<div id="r4cl" class="t" style="left:1066.40px;top:998.26px;font:400 24.5px/24.5px 'Liberation Sans',sans-serif;-webkit-text-stroke:0.35px #991b1b;letter-spacing:0.600px;color:#991b1b">Major</div>
<div id="r4aog" class="t" style="left:1237.40px;top:999.95px;font:400 22.5px/22.5px 'Liberation Sans',sans-serif;-webkit-text-stroke:0.35px #991b1b;letter-spacing:-0.300px;color:#991b1b">AOG</div>
<div id="r4ti" class="t" style="left:1370.00px;top:993.87px;font:400 28.5px/28.5px 'Liberation Sans',sans-serif;letter-spacing:-0.638px;color:#0a0a0a">Process Test — AOG Engine Vibration</div>
<div id="r4dt" class="t" style="left:1928.40px;top:993.87px;font:400 28.5px/28.5px 'Liberation Sans',sans-serif;letter-spacing:-0.575px;color:#0a0a0a">2026-03-12 00:00:00+05:30</div>
<div id="r4st" class="t" style="left:2352.00px;top:1000.38px;font:400 22.0px/22.0px 'Liberation Sans',sans-serif;-webkit-text-stroke:0.7px #1e40af;letter-spacing:-0.367px;color:#1e40af">OPEN</div>
<div id="r5no" class="t" style="left:563.00px;top:1084.32px;font:700 27.0px/27.0px 'Liberation Mono',monospace;letter-spacing:-0.971px;color:#0a0a0a">SNAG-202603-006</div>
<div id="r5ac" class="t" style="left:877.20px;top:1085.11px;font:400 23.5px/23.5px 'Liberation Sans',sans-serif;-webkit-text-stroke:0.35px #1e40af;letter-spacing:-0.560px;color:#1e40af">VT-ACG</div>
<div id="r5cl" class="t" style="left:1066.40px;top:1084.26px;font:400 24.5px/24.5px 'Liberation Sans',sans-serif;-webkit-text-stroke:0.35px #991b1b;letter-spacing:0.600px;color:#991b1b">Major</div>
<div id="r5aog" class="t" style="left:1237.40px;top:1085.95px;font:400 22.5px/22.5px 'Liberation Sans',sans-serif;-webkit-text-stroke:0.35px #991b1b;letter-spacing:-0.300px;color:#991b1b">AOG</div>
<div id="r5ti" class="t" style="left:1370.00px;top:1079.87px;font:400 28.5px/28.5px 'Liberation Sans',sans-serif;letter-spacing:-0.638px;color:#0a0a0a">Process Test — AOG Engine Vibration</div>
<div id="r5dt" class="t" style="left:1928.40px;top:1079.87px;font:400 28.5px/28.5px 'Liberation Sans',sans-serif;letter-spacing:-0.575px;color:#0a0a0a">2026-03-12 00:00:00+05:30</div>
<div id="r5st" class="t" style="left:2352.00px;top:1086.38px;font:400 22.0px/22.0px 'Liberation Sans',sans-serif;-webkit-text-stroke:0.7px #1e40af;letter-spacing:-0.367px;color:#1e40af">OPEN</div>
<div id="r6no" class="t" style="left:563.00px;top:1170.32px;font:700 27.0px/27.0px 'Liberation Mono',monospace;letter-spacing:-0.971px;color:#0a0a0a">SNAG-202603-007</div>
<div id="r6ac" class="t" style="left:877.20px;top:1171.11px;font:400 23.5px/23.5px 'Liberation Sans',sans-serif;-webkit-text-stroke:0.35px #1e40af;letter-spacing:-0.560px;color:#1e40af">VT-ACG</div>
<div id="r6cl" class="t" style="left:1066.40px;top:1170.26px;font:400 24.5px/24.5px 'Liberation Sans',sans-serif;-webkit-text-stroke:0.35px #991b1b;letter-spacing:0.600px;color:#991b1b">Major</div>
<div id="r6aog" class="t" style="left:1237.40px;top:1171.95px;font:400 22.5px/22.5px 'Liberation Sans',sans-serif;-webkit-text-stroke:0.35px #991b1b;letter-spacing:-0.300px;color:#991b1b">AOG</div>
<div id="r6ti" class="t" style="left:1370.00px;top:1165.87px;font:400 28.5px/28.5px 'Liberation Sans',sans-serif;letter-spacing:-0.638px;color:#0a0a0a">Process Test — AOG Engine Vibration</div>
<div id="r6dt" class="t" style="left:1928.40px;top:1165.87px;font:400 28.5px/28.5px 'Liberation Sans',sans-serif;letter-spacing:-0.575px;color:#0a0a0a">2026-03-12 00:00:00+05:30</div>
<div id="r6st" class="t" style="left:2352.00px;top:1172.38px;font:400 22.0px/22.0px 'Liberation Sans',sans-serif;-webkit-text-stroke:0.7px #1e40af;letter-spacing:-0.367px;color:#1e40af">OPEN</div>
<div id="r7no" class="t" style="left:563.00px;top:1256.32px;font:700 27.0px/27.0px 'Liberation Mono',monospace;letter-spacing:-0.971px;color:#0a0a0a">SNAG-202603-001</div>
<div id="r7ac" class="t" style="left:877.20px;top:1257.11px;font:400 23.5px/23.5px 'Liberation Sans',sans-serif;-webkit-text-stroke:0.35px #1e40af;letter-spacing:-0.560px;color:#1e40af">VT-ACG</div>
<div id="r7cl" class="t" style="left:1066.40px;top:1256.26px;font:400 24.5px/24.5px 'Liberation Sans',sans-serif;-webkit-text-stroke:0.35px #991b1b;letter-spacing:0.600px;color:#991b1b">Major</div>
<div id="r7aog" class="t" style="left:1237.40px;top:1257.95px;font:400 22.5px/22.5px 'Liberation Sans',sans-serif;-webkit-text-stroke:0.35px #991b1b;letter-spacing:-0.300px;color:#991b1b">AOG</div>
<div id="r7ti" class="t" style="left:1370.00px;top:1251.87px;font:400 28.5px/28.5px 'Liberation Sans',sans-serif;letter-spacing:-0.638px;color:#0a0a0a">Process Test — AOG Engine Vibration</div>
<div id="r7dt" class="t" style="left:1928.40px;top:1251.87px;font:400 28.5px/28.5px 'Liberation Sans',sans-serif;letter-spacing:-0.575px;color:#0a0a0a">2026-03-12 00:00:00+05:30</div>
<div id="r7st" class="t" style="left:2352.00px;top:1258.38px;font:400 22.0px/22.0px 'Liberation Sans',sans-serif;-webkit-text-stroke:0.7px #1e40af;letter-spacing:-0.367px;color:#1e40af">OPEN</div>
<div id="r8no" class="t" style="left:563.00px;top:1342.32px;font:700 27.0px/27.0px 'Liberation Mono',monospace;letter-spacing:-0.971px;color:#0a0a0a">SNAG-202602-006</div>
<div id="r8ac" class="t" style="left:877.20px;top:1343.11px;font:400 23.5px/23.5px 'Liberation Sans',sans-serif;-webkit-text-stroke:0.35px #1e40af;letter-spacing:-0.560px;color:#1e40af">VT-EBB</div>
<div id="r8cl" class="t" style="left:1066.40px;top:1342.26px;font:400 24.5px/24.5px 'Liberation Sans',sans-serif;-webkit-text-stroke:0.35px #991b1b;letter-spacing:0.600px;color:#991b1b">Major</div>
<div id="r8aog" class="t" style="left:1237.40px;top:1343.95px;font:400 22.5px/22.5px 'Liberation Sans',sans-serif;-webkit-text-stroke:0.35px #991b1b;letter-spacing:-0.300px;color:#991b1b">AOG</div>
<div id="r8ti" class="t" style="left:1370.00px;top:1337.87px;font:400 28.5px/28.5px 'Liberation Sans',sans-serif;letter-spacing:-0.227px;color:#0a0a0a">Engine oil pressure fluctuation</div>
<div id="r8dt" class="t" style="left:1928.40px;top:1337.87px;font:400 28.5px/28.5px 'Liberation Sans',sans-serif;letter-spacing:-0.575px;color:#0a0a0a">2026-02-24 00:00:00+05:30</div>
<div id="r8st" class="t" style="left:2352.00px;top:1344.38px;font:400 22.0px/22.0px 'Liberation Sans',sans-serif;-webkit-text-stroke:0.7px #1e40af;letter-spacing:-0.367px;color:#1e40af">OPEN</div>
<div id="r9no" class="t" style="left:563.00px;top:1428.32px;font:700 27.0px/27.0px 'Liberation Mono',monospace;letter-spacing:-1.043px;color:#0a0a0a">SNAG-202602-004</div>
<div id="r9ac" class="t" style="left:877.20px;top:1429.11px;font:400 23.5px/23.5px 'Liberation Sans',sans-serif;-webkit-text-stroke:0.35px #1e40af;letter-spacing:-0.560px;color:#1e40af">VT-ACG</div>
<div id="r9cl" class="t" style="left:1066.40px;top:1428.26px;font:400 24.5px/24.5px 'Liberation Sans',sans-serif;-webkit-text-stroke:0.35px #9a3412;letter-spacing:0.950px;color:#9a3412">Minor</div>
<div id="r9aog" class="t" style="left:1216.70px;top:1423.87px;font:400 28.5px/28.5px 'Liberation Sans',sans-serif;letter-spacing:0.000px;color:#0a0a0a">—</div>
<div id="r9ti" class="t" style="left:1370.00px;top:1423.87px;font:400 28.5px/28.5px 'Liberation Sans',sans-serif;letter-spacing:0.043px;color:#0a0a0a">Landing light flickering</div>
<div id="r9dt" class="t" style="left:1928.40px;top:1423.87px;font:400 28.5px/28.5px 'Liberation Sans',sans-serif;letter-spacing:-0.575px;color:#0a0a0a">2026-02-23 00:00:00+05:30</div>
<div id="r9st" class="t" style="left:2352.00px;top:1430.38px;font:400 22.0px/22.0px 'Liberation Sans',sans-serif;-webkit-text-stroke:0.7px #1e40af;letter-spacing:-0.367px;color:#1e40af">OPEN</div>
<div id="r10no" class="t" style="left:563.00px;top:1514.32px;font:700 27.0px/27.0px 'Liberation Mono',monospace;letter-spacing:-0.971px;color:#0a0a0a">SNAG-202602-001</div>
<div id="r10ac" class="t" style="left:877.20px;top:1515.11px;font:400 23.5px/23.5px 'Liberation Sans',sans-serif;-webkit-text-stroke:0.35px #1e40af;letter-spacing:-0.560px;color:#1e40af">VT-ACG</div>
<div id="r10cl" class="t" style="left:1066.40px;top:1514.26px;font:400 24.5px/24.5px 'Liberation Sans',sans-serif;-webkit-text-stroke:0.35px #991b1b;letter-spacing:0.600px;color:#991b1b">Major</div>
<div id="r10aog" class="t" style="left:1237.40px;top:1515.95px;font:400 22.5px/22.5px 'Liberation Sans',sans-serif;-webkit-text-stroke:0.35px #991b1b;letter-spacing:-0.300px;color:#991b1b">AOG</div>
<div id="r10ti" class="t" style="left:1370.00px;top:1509.87px;font:400 28.5px/28.5px 'Liberation Sans',sans-serif;letter-spacing:-0.212px;color:#0a0a0a">Hydraulic pump low pressure warning</div>
<div id="r10dt" class="t" style="left:1928.40px;top:1509.87px;font:400 28.5px/28.5px 'Liberation Sans',sans-serif;letter-spacing:-0.575px;color:#0a0a0a">2026-02-22 00:00:00+05:30</div>
<div id="r10st" class="t" style="left:2352.00px;top:1516.38px;font:400 22.0px/22.0px 'Liberation Sans',sans-serif;-webkit-text-stroke:0.7px #1e40af;letter-spacing:-0.367px;color:#1e40af">OPEN</div>
<div id="r11no" class="t" style="left:563.00px;top:1599.32px;font:700 27.0px/27.0px 'Liberation Mono',monospace;letter-spacing:-1.014px;color:#0a0a0a">SNAG-202602-002</div>
<div id="r11ac" class="t" style="left:877.40px;top:1600.11px;font:400 23.5px/23.5px 'Liberation Sans',sans-serif;-webkit-text-stroke:0.35px #1e40af;letter-spacing:-0.720px;color:#1e40af">VT-ACG</div>
<div id="r11cl" class="t" style="left:1067.80px;top:1599.26px;font:400 24.5px/24.5px 'Liberation Sans',sans-serif;-webkit-text-stroke:0.35px #991b1b;letter-spacing:0.400px;color:#991b1b">Major</div>
<div id="r11aog" class="t" style="left:1215.90px;top:1595.87px;font:400 28.5px/28.5px 'Liberation Sans',sans-serif;letter-spacing:0.000px;color:#0a0a0a">—</div>
<div id="r11ti" class="t" style="left:1372.00px;top:1595.87px;font:400 28.5px/28.5px 'Liberation Sans',sans-serif;letter-spacing:1.593px;color:#0a0a0a">Cabin pressure controller fault</div>
<div id="r11dt" class="t" style="left:1928.80px;top:1595.87px;font:400 28.5px/28.5px 'Liberation Sans',sans-serif;letter-spacing:-0.625px;color:#0a0a0a">2026-02-20 00:00:00+05:30</div>
<div id="r11st" class="t" style="left:2354.00px;top:1602.65px;font:400 20.5px/20.5px 'Liberation Sans',sans-serif;-webkit-text-stroke:0.7px #9a3412;letter-spacing:-0.686px;color:#9a3412">DEFERRED</div>
<div class="b" style="left:516px;top:302px;width:2008px;height:1400px;border:4px solid #dbe6fc;border-radius:16px;box-sizing:border-box;pointer-events:none"></div>
<div class="b" style="left:520px;top:306px;width:2000px;height:1400px;border:4px solid #3b82f6;border-radius:12px;box-sizing:border-box"></div>
<div class="b" style="left:520px;top:258px;width:166px;height:44px;background:#3b82f6;border-radius:8px 8px 0 0"></div>
<div id="tag" class="t" style="left:535.90px;top:269.78px;font:700 22.0px/22.0px 'Liberation Sans',sans-serif;letter-spacing:-0.918px;color:#fff">Snag Reports</div>
<div class="b" style="left:0;top:1440px;width:160px;height:160px;border-radius:50%;background:radial-gradient(circle at 50% 50%, rgba(0,0,0,0.06), rgba(0,0,0,0) 70%)"></div>
<div class="b" style="left:38px;top:1486px;width:76px;height:76px;border-radius:50%;background:#333;box-sizing:border-box;border:2px solid #111;box-shadow:inset 0 0 0 2px #4a4a4a"></div>
<svg class="i" style="left:62px;top:1511px;width:28px;height:30px" viewBox="0 0 28 30"><defs><linearGradient id="ng" x1="0" y1="0" x2="1" y2="1"><stop offset="0.55" stop-color="#fff"/><stop offset="1" stop-color="#fff" stop-opacity="0"/></linearGradient><linearGradient id="ng2" x1="0" y1="0" x2="0" y2="1"><stop offset="0" stop-color="#fff"/><stop offset="0.9" stop-color="#fff" stop-opacity="0"/></linearGradient></defs>
<path d="M2 2 H6 L26 28 H22 Z" fill="url(#ng)"/><rect x="2" y="2" width="4" height="26" fill="#fff"/><rect x="21" y="2" width="4" height="18" fill="url(#ng2)"/></svg>
<script>(function(){var w=window.innerWidth;if(w&&Math.abs(w-2560)>2){document.documentElement.style.zoom=w/2560;}})();</script>
</body></html>
